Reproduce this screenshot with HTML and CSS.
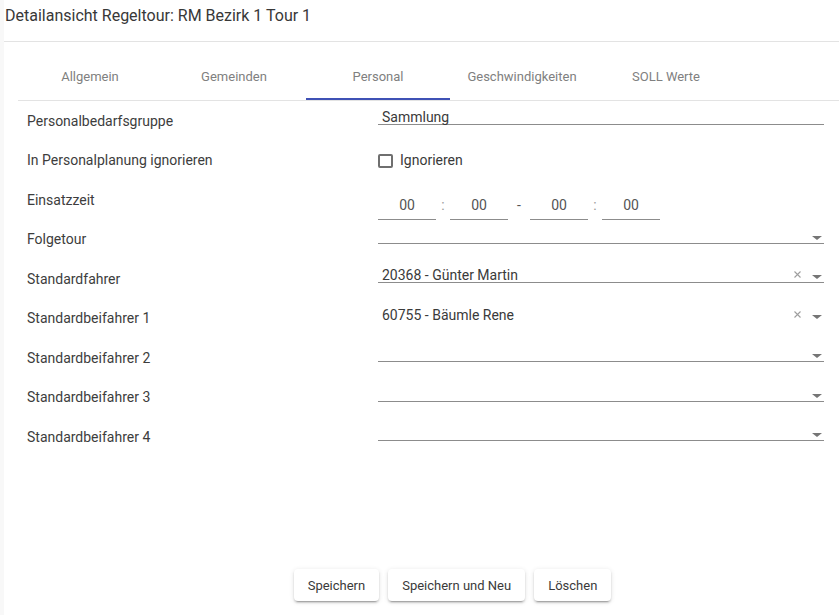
FILE: index.html
```html
<!DOCTYPE html>
<html lang="de">
<head>
<meta charset="utf-8">
<title>Detailansicht Regeltour</title>
<link rel="stylesheet" href="styles.css">
</head>
<body>
<div class="page">
  <header class="title-bar">Detailansicht Regeltour: RM Bezirk 1 Tour 1</header>
  <div class="content">
    <nav class="tabs">
      <div class="tab">Allgemein</div>
      <div class="tab">Gemeinden</div>
      <div class="tab active">Personal</div>
      <div class="tab">Geschwindigkeiten</div>
      <div class="tab">SOLL Werte</div>
    </nav>
    <div class="form">
      <div class="row">
        <div class="label">Personalbedarfsgruppe</div>
        <div class="field"><span class="value">Sammlung</span></div>
      </div>
      <div class="row">
        <div class="label">In Personalplanung ignorieren</div>
        <label class="check"><span class="box"></span><span>Ignorieren</span></label>
      </div>
      <div class="row">
        <div class="label">Einsatzzeit</div>
        <div class="times">
          <div class="time">00</div><div class="sep">:</div>
          <div class="time">00</div><div class="sep dash">-</div>
          <div class="time">00</div><div class="sep">:</div>
          <div class="time">00</div>
        </div>
      </div>
      <div class="row">
        <div class="label">Folgetour</div>
        <div class="field select"><span class="value"></span><span class="arrow"></span></div>
      </div>
      <div class="row">
        <div class="label">Standardfahrer</div>
        <div class="field select"><span class="value">20368 - Günter Martin</span>
          <svg class="clear" width="7" height="7" viewBox="0 0 7 7"><path d="M0.5 0.5L6.5 6.5M6.5 0.5L0.5 6.5" stroke="#9e9e9e" stroke-width="1.1"/></svg>
          <span class="arrow"></span></div>
      </div>
      <div class="row">
        <div class="label">Standardbeifahrer 1</div>
        <div class="field select noline"><span class="value">60755 - Bäumle Rene</span>
          <svg class="clear" width="7" height="7" viewBox="0 0 7 7"><path d="M0.5 0.5L6.5 6.5M6.5 0.5L0.5 6.5" stroke="#9e9e9e" stroke-width="1.1"/></svg>
          <span class="arrow"></span></div>
      </div>
      <div class="row">
        <div class="label">Standardbeifahrer 2</div>
        <div class="field select"><span class="value"></span><span class="arrow"></span></div>
      </div>
      <div class="row">
        <div class="label">Standardbeifahrer 3</div>
        <div class="field select"><span class="value"></span><span class="arrow"></span></div>
      </div>
      <div class="row">
        <div class="label">Standardbeifahrer 4</div>
        <div class="field select"><span class="value"></span><span class="arrow"></span></div>
      </div>
    </div>
    <div class="actions">
      <button class="btn">Speichern</button>
      <button class="btn">Speichern und Neu</button>
      <button class="btn">Löschen</button>
    </div>
  </div>
</div>
</body>
</html>
```

FILE: styles.css
```css
* { box-sizing: border-box; }
html, body { margin: 0; height: 100%; }
body {
  background: #f8f8f8;
  font-family: Roboto, "Noto Sans", Arial, sans-serif;
  color: #3a3a3a;
}
.page {
  margin-left: 4px;
  height: 100%;
  background: #fff;
  display: flex;
  flex-direction: column;
}
.title-bar {
  height: 42px;
  padding-left: 1px;
  line-height: 32px;
  font-size: 16px;
  color: #383838;
  border-bottom: 1px solid #e3e3e3;
}
.content {
  flex: 1;
  display: flex;
  flex-direction: column;
  padding-left: 14px;
}
.tabs {
  margin-top: 10px;
  display: flex;
  border-bottom: 1px solid #e3e3e3;
}
.tab {
  width: 144px;
  height: 48px;
  display: flex;
  align-items: center;
  justify-content: center;
  padding-top: 2px;
  font-size: 13px;
  color: #808080;
  border-bottom: 2px solid transparent;
}
.tab.active { border-bottom-color: #3f51b5; }
.form {
  flex: 1;
  display: flex;
  flex-direction: column;
  padding: 0 15px 0 9px;
}
.row {
  height: 39.5px;
  display: flex;
  align-items: center;
  font-size: 14px;
}
.label {
  width: 351px;
  flex: none;
  color: #3d3d3d;
}
.field {
  align-self: flex-start;
  margin-top: 4px;
  height: 20px;
  flex: 1;
  display: flex;
  align-items: flex-end;
  border-bottom: 1px solid rgba(0, 0, 0, 0.45);
}
.field.noline { border-bottom-color: transparent; }
.value {
  flex: 1;
  padding-left: 4px;
  line-height: 14px;
  color: #3a3a3a;
}
.clear {
  margin: 0 11px 4px 0;
  flex: none;
}
.arrow {
  flex: none;
  width: 0;
  height: 0;
  border-left: 5px solid transparent;
  border-right: 5px solid transparent;
  border-top: 4px solid #757575;
  margin: 0 2px 3px 0;
}
.check {
  display: flex;
  align-items: center;
  gap: 7px;
  color: #3a3a3a;
}
.box {
  width: 15px;
  height: 14px;
  border: 2px solid #6f6f6f;
  border-radius: 2px;
  margin-top: 1px;
}
.times {
  align-self: flex-start;
  margin-top: 12px;
  display: flex;
}
.time {
  width: 58px;
  height: 28px;
  line-height: 27px;
  text-align: center;
  color: #555;
  border-bottom: 1px solid rgba(0, 0, 0, 0.45);
}
.sep {
  width: 14px;
  line-height: 27px;
  text-align: center;
  color: #999;
}
.sep.dash { width: 22px; color: #555; }
.actions {
  display: flex;
  justify-content: center;
  gap: 9px;
  padding: 0 0 14px 48px;
}
.btn {
  height: 32px;
  padding: 0 14px;
  border: none;
  border-radius: 4px;
  background: #fff;
  font-family: Roboto, "Noto Sans", Arial, sans-serif;
  font-size: 13px;
  color: #3a3a3a;
  box-shadow: 0 3px 1px -2px rgba(0,0,0,.2), 0 2px 2px 0 rgba(0,0,0,.14), 0 1px 5px 0 rgba(0,0,0,.12);
}
```
